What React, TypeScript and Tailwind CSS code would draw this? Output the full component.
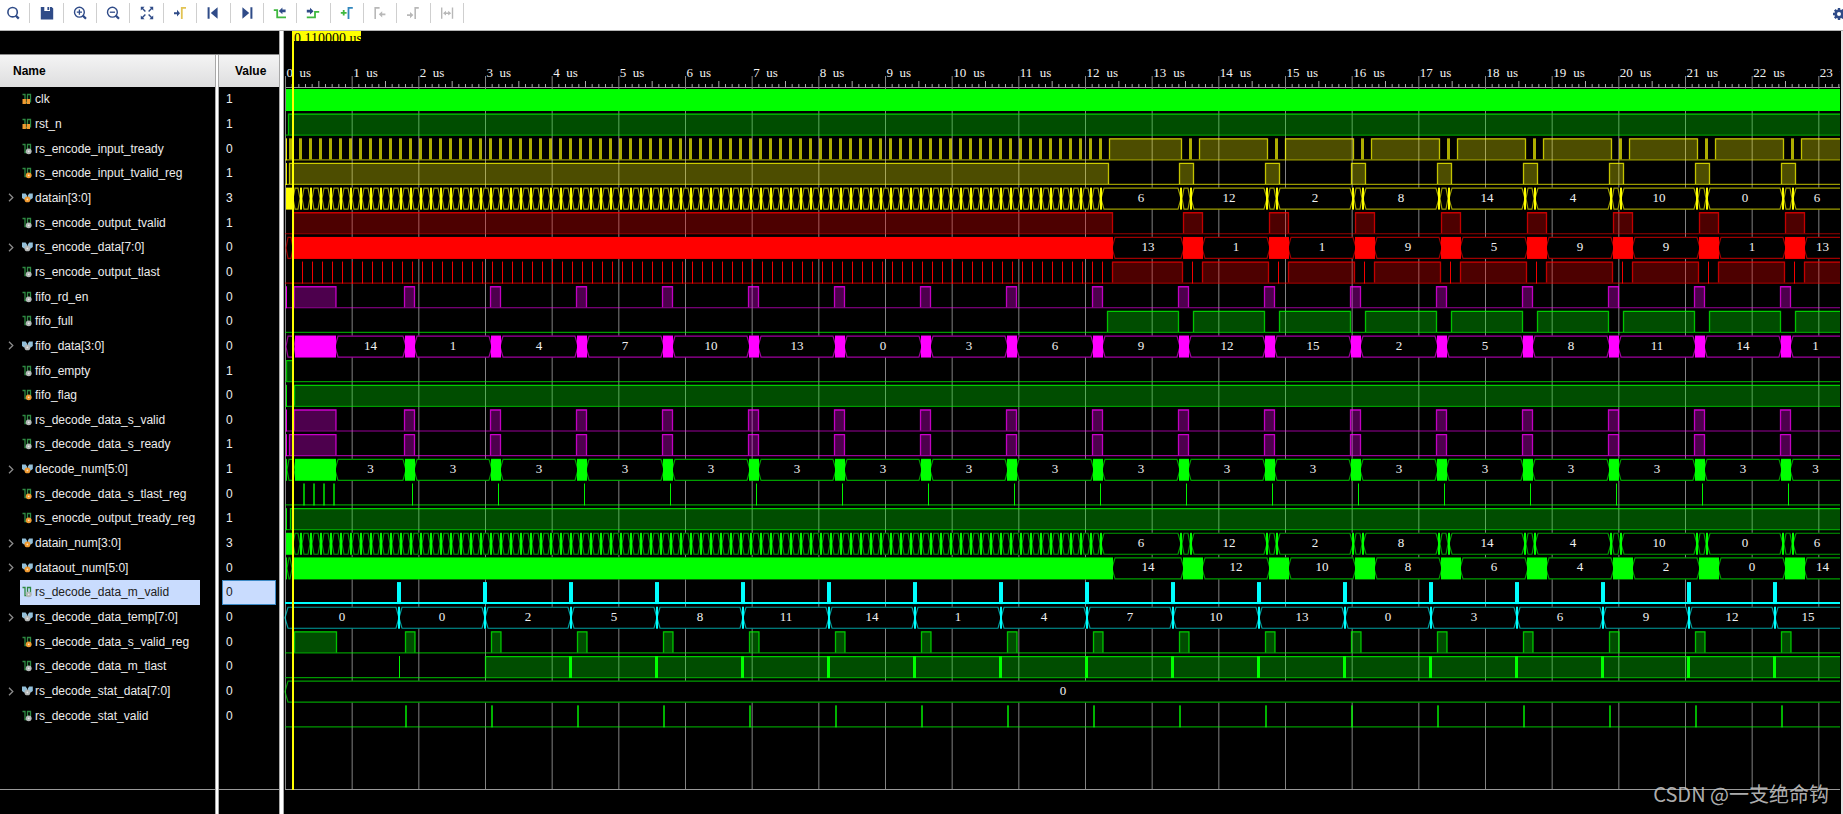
import React from "react";

/* ---------- signal model ---------- */

type Seg =
  | { k: "high"; a: number; b: number }
  | { k: "solid"; a: number; b: number }
  | { k: "cell"; a: number; b: number; v?: string };

type IconKind = "port" | "wire" | "reg" | "busWire" | "busReg";

interface Signal {
  name: string;
  value: string;
  icon: IconKind;
  color: string;
  bus?: boolean;
  selected?: boolean;
  segs: Seg[];
}

const START = 286;
const END = 1840;
const PERIOD = 86;
const GREEN = "#00ff00";
const YELLOW = "#ffff00";
const RED = "#ff0000";
const MAGENTA = "#ff00ff";
const CYAN = "#00ffff";

const high = (a: number, b: number): Seg => ({ k: "high", a, b: Math.min(b, END) });
const solid = (a: number, b: number): Seg => ({ k: "solid", a, b: Math.min(b, END) });
const cell = (a: number, b: number, v?: string): Seg => ({ k: "cell", a, b, v });

/** Repeats a segment builder n times, a fixed step apart. */
function every(n: number, step: number, make: (dx: number) => Seg[]): Seg[] {
  const out: Seg[] = [];
  for (let i = 0; i < n; i++) out.push(...make(i * step));
  return out;
}

/** Bus whose wide cells are separated by short bursts of activity. */
function burstCells(from: number, burst: number, width: number, values: string[]): Seg[] {
  const out: Seg[] = [];
  let a = from;
  values.forEach((v, i) => {
    const b = burst + i * PERIOD;
    if (b > END) {
      out.push(cell(a, END + 6, v));
      return;
    }
    out.push(cell(a, b, v), solid(b, b + width));
    a = b + width;
  });
  return out;
}

const nibbleValues = ["6", "12", "2", "8", "14", "4", "10", "0", "6"];

function nibbleBus(): Seg[] {
  const out: Seg[] = [solid(START, 293), cell(293, 300)];
  out.push(...every(80, 10, (d) => [solid(300 + d, 302 + d), cell(302 + d, 310 + d)]));
  out.push(solid(1100, 1102));
  let a = 1102;
  nibbleValues.forEach((v, i) => {
    const b = 1180 + i * PERIOD;
    if (b > END) {
      out.push(cell(a, END + 6, v));
      return;
    }
    out.push(cell(a, b, v), solid(b, b + 2), cell(b + 2, b + 10), solid(b + 10, b + 12));
    a = b + 12;
  });
  return out;
}

const readPulses = (first: number): Seg[] => [
  solid(START, START + 1),
  high(first, 336),
  ...every(17, PERIOD, (d) => [high(404.5 + d, 414.5 + d)]),
];

const tempValues = "0 0 2 5 8 11 14 1 4 7 10 13 0 3 6 9 12 15".split(" ");
const fifoValues = "14 1 4 7 10 13 0 3 6 9 12 15 2 5 8 11 14 1".split(" ");

const signals: Signal[] = [
  { name: "clk", value: "1", icon: "port", color: GREEN, segs: [solid(START, END)] },
  { name: "rst_n", value: "1", icon: "port", color: GREEN, segs: [high(288.5, END)] },
  {
    name: "rs_encode_input_tready", value: "0", icon: "wire", color: YELLOW,
    segs: [
      solid(286, 287), high(289.5, 292.5),
      ...every(81, 10, (d) => [high(299.5 + d, 301.5 + d)]),
      high(1109.5, 1181.5),
      ...every(8, PERIOD, (d) => [high(1189.5 + d, 1191.5 + d), high(1199.5 + d, 1267.5 + d)]),
    ],
  },
  {
    name: "rs_encode_input_tvalid_reg", value: "1", icon: "reg", color: YELLOW,
    segs: [solid(286, 287), high(289.5, 1108.5), ...every(8, PERIOD, (d) => [high(1179.5 + d, 1193.5 + d)])],
  },
  { name: "datain[3:0]", value: "3", icon: "busReg", color: YELLOW, bus: true, segs: nibbleBus() },
  {
    name: "rs_encode_output_tvalid", value: "1", icon: "wire", color: RED,
    segs: [high(293.5, 1112.5), ...every(8, PERIOD, (d) => [high(1183.5 + d, 1202.5 + d)])],
  },
  {
    name: "rs_encode_data[7:0]", value: "0", icon: "busWire", color: RED, bus: true,
    segs: [
      cell(286, 293), solid(293, 1113),
      ...burstCells(1113, 1183, 20, ["13", "1", "1", "9", "5", "9", "9", "1", "13"]),
    ],
  },
  {
    name: "rs_encode_output_tlast", value: "0", icon: "wire", color: RED,
    segs: [
      ...every(81, 10, (d) => [solid(302 + d, 303 + d)]),
      high(1112.5, 1182.5),
      ...every(8, PERIOD, (d) => [solid(1192 + d, 1193 + d), high(1202.5 + d, 1268.5 + d)]),
    ],
  },
  { name: "fifo_rd_en", value: "0", icon: "wire", color: MAGENTA, segs: readPulses(294) },
  {
    name: "fifo_full", value: "0", icon: "wire", color: GREEN,
    segs: [high(1107.5, 1178.5), ...every(8, PERIOD, (d) => [high(1193.5 + d, 1264.5 + d)])],
  },
  {
    name: "fifo_data[3:0]", value: "0", icon: "busWire", color: MAGENTA, bus: true,
    segs: [cell(286, 295), solid(295, 336), ...burstCells(336, 405, 10, fifoValues)],
  },
  { name: "fifo_empty", value: "1", icon: "wire", color: GREEN, segs: [high(286.5, 293)] },
  { name: "fifo_flag", value: "0", icon: "reg", color: GREEN, segs: [solid(286, 287), high(294.5, END)] },
  { name: "rs_decode_data_s_valid", value: "0", icon: "wire", color: MAGENTA, segs: readPulses(294) },
  { name: "rs_decode_data_s_ready", value: "1", icon: "wire", color: MAGENTA, segs: readPulses(289.5) },
  {
    name: "decode_num[5:0]", value: "1", icon: "busReg", color: GREEN, bus: true,
    segs: [
      solid(286, 287), cell(287, 295), solid(295, 336),
      ...burstCells(336, 405, 10, fifoValues.map(() => "3")),
    ],
  },
  {
    name: "rs_decode_data_s_tlast_reg", value: "0", icon: "reg", color: GREEN,
    segs: [
      ...every(4, 10, (d) => [solid(303 + d, 305 + d)]),
      ...every(17, PERIOD, (d) => [solid(412 + d, 413 + d)]),
    ],
  },
  {
    name: "rs_enocde_output_tready_reg", value: "1", icon: "reg", color: GREEN,
    segs: [solid(286, 287), high(290.5, END)],
  },
  { name: "datain_num[3:0]", value: "3", icon: "busReg", color: GREEN, bus: true, segs: nibbleBus() },
  {
    name: "dataout_num[5:0]", value: "0", icon: "busReg", color: GREEN, bus: true,
    segs: [
      solid(286, 287), cell(287, 292), solid(292, 1113),
      ...burstCells(1113, 1183, 20, ["14", "12", "10", "8", "6", "4", "2", "0", "14"]),
    ],
  },
  {
    name: "rs_decode_data_m_valid", value: "0", icon: "wire", color: CYAN, selected: true,
    segs: every(17, PERIOD, (d) => [solid(397 + d, 401 + d)]),
  },
  {
    name: "rs_decode_data_temp[7:0]", value: "0", icon: "busWire", color: CYAN, bus: true,
    segs: burstCells(286, 398, 2, tempValues),
  },
  {
    name: "rs_decode_data_s_valid_reg", value: "0", icon: "reg", color: GREEN,
    segs: [high(294.5, 336.5), ...every(17, PERIOD, (d) => [high(405.5 + d, 415 + d)])],
  },
  {
    name: "rs_decode_data_m_tlast", value: "0", icon: "wire", color: GREEN,
    segs: [
      solid(399, 400), high(485.5, END),
      ...every(15, PERIOD, (d) => [solid(569 + d, 572 + d)]),
    ],
  },
  {
    name: "rs_decode_stat_data[7:0]", value: "0", icon: "busWire", color: GREEN, bus: true,
    segs: [cell(286, END + 6, "0")],
  },
  {
    name: "rs_decode_stat_valid", value: "0", icon: "wire", color: GREEN,
    segs: every(17, PERIOD, (d) => [solid(405 + d, 407 + d)]),
  },
];

/* ---------- waveform drawing ---------- */

const TOP = 31;
const LEFT = 284;
const ROW_TOP = 89;
const ROW_PITCH = 641 / 26;
const H = 21;
const US = 400 / 6;
const ORIGIN = 285.5;
const BOTTOM = 789;

function Trace({ signal, y }: { signal: Signal; y: number }) {
  const { color, bus, selected, segs } = signal;
  const bottom = y + H;
  return (
    <g>
      {bus && <rect x={START} y={y} width={END - START} height={H + 1} fill="#000" />}
      {!bus && (
        <path
          d={`M${START - 1} ${selected ? bottom : bottom + 0.5}H${END}`}
          stroke={color}
          strokeWidth={selected ? 2 : 1.2}
          opacity={selected ? 1 : 0.6}
        />
      )}
      {segs.map((s, i) => {
        if (s.k === "solid") {
          const width = s.b - s.a;
          const opacity = bus || width > 2 ? 1 : width === 2 ? 0.7 : 0.95;
          return <rect key={i} x={s.a} y={y} width={width} height={H + 1} fill={color} opacity={opacity} />;
        }
        if (s.k === "high") {
          const closed = s.b < END;
          if (s.b - s.a < 4) {
            return (
              <rect
                key={i}
                x={s.a - 0.5}
                y={y}
                width={s.b - s.a + 1}
                height={H}
                fill={color}
                opacity={0.68}
              />
            );
          }
          return (
            <g key={i}>
              <rect x={s.a} y={y} width={s.b - s.a} height={H} fill={color} opacity={0.3} />
              <path
                d={`M${s.a} ${bottom}V${y + 0.5}H${s.b}${closed ? `V${bottom}` : ""}`}
                fill="none"
                stroke={color}
                strokeWidth={1.3}
                opacity={0.72}
              />
            </g>
          );
        }
        const t = y + 0.5;
        const m = y + 11;
        const b = bottom + 0.5;
        const visibleEnd = Math.min(s.b, END);
        const o = s.b - s.a > 20 ? 1 : 0;
        return (
          <g key={i}>
            <path
              d={`M${s.a - o} ${m}L${s.a + 2} ${t}H${s.b - 2}L${s.b + o} ${m}L${s.b - 2} ${b}H${s.a + 2}Z`}
              fill="none"
              stroke={color}
              strokeWidth={1.2}
              opacity={0.62}
            />
            {s.v && (
              <text x={(s.a + visibleEnd) / 2} y={y + 14} textAnchor="middle" fill="#f2f2f2">
                {s.v}
              </text>
            )}
          </g>
        );
      })}
    </g>
  );
}

function Waveform() {
  const ticks = Array.from({ length: 234 }, (_, i) => i);
  const majors = Array.from({ length: 24 }, (_, i) => i);
  return (
    <svg
      width="1557"
      height="783"
      className="block font-['Liberation_Serif','Times_New_Roman',serif] text-[13px]"
      role="img"
      aria-label="Waveform"
    >
      <defs>
        <clipPath id="plot">
          <rect x={LEFT} y={TOP} width={END - LEFT} height={783} />
        </clipPath>
        <clipPath id="cursor-flag">
          <rect x={293} y={31} width={68} height={10} />
        </clipPath>
      </defs>
      <g transform={`translate(${-LEFT} ${-TOP})`} clipPath="url(#plot)">
        <path d={`M285 87.5H${END}`} stroke="#9a9a9a" />
        {ticks.map((i) => {
          if (i % 10 === 0) return null;
          const x = ORIGIN + (i * US) / 10;
          return <path key={i} d={`M${x} 87V${i % 5 === 0 ? 81 : 84}`} stroke="#a8a8a8" />;
        })}
        {majors.map((i) => {
          const x = ORIGIN + i * US;
          return (
            <g key={i}>
              <path d={`M${x} 76V${BOTTOM}`} stroke="#828282" />
              <text y={77} fill="#f2f2f2">
                <tspan x={x + 1}>{i} </tspan>
                <tspan x={x + (i > 9 ? 21 : 14)}>us</tspan>
              </text>
            </g>
          );
        })}
        <path d={`M285 ${BOTTOM + 0.5}H${END}`} stroke="#9a9a9a" />
        {signals.map((s, i) => (
          <Trace key={s.name} signal={s} y={ROW_TOP + i * ROW_PITCH} />
        ))}
        <rect x={292} y={31} width={2} height={759} fill={YELLOW} />
        <rect x={293} y={31} width={68} height={10} fill={YELLOW} />
        <g clipPath="url(#cursor-flag)">
          <text x={294} y={43} fill="#000" className="text-[14px]">
            0.110000 us
          </text>
        </g>
      </g>
    </svg>
  );
}

/* ---------- signal list ---------- */

function SignalIcon({ kind }: { kind: IconKind }) {
  const dot = kind === "reg" || kind === "busReg" ? "#f09a30" : "#b4b8b8";
  const isBus = kind === "busWire" || kind === "busReg";
  return (
    <svg width="11" height="12" viewBox="0 0 11 12" className="shrink-0" aria-hidden="true">
      {isBus ? (
        <>
          <path d="M0 1.5H3.6L5 3.6V7.5H2L0 6zM10.8 1.5H7.2L5.8 3.6V7.5H8.8L10.8 6z" fill="#93bfd8" />
          <circle cx="5.4" cy="7.4" r="2.9" fill={dot} />
          <circle cx="5.4" cy="7.4" r="0.9" fill="#fff" opacity="0.7" />
        </>
      ) : (
        <>
          <path d="M0.5 1.5H3V9.5H5.5V1.5H8.5V9.5" fill="none" stroke="#2f8a43" strokeWidth="1.3" />
          {kind === "port" ? (
            <path d="M0.5 6h3.4v5H0.5zM4.6 6h3.4v5H4.6z" fill="#f09a30" />
          ) : (
            <>
              <circle cx="6.7" cy="8.3" r="2.9" fill={dot} />
              <circle cx="6.7" cy="8.3" r="0.9" fill="#fff" opacity="0.7" />
            </>
          )}
        </>
      )}
    </svg>
  );
}

const headCell = "flex h-8 items-center bg-linear-to-b from-[#f4f4f4] to-[#dededf] font-bold text-black";
const rowsGrid = "grid h-[641px] grid-rows-[repeat(26,minmax(0,1fr))]";

function NameColumn() {
  return (
    <div className="flex w-[215px] flex-col">
      <table className="block">
        <thead className="block">
          <tr className="block">
            <th className={`${headCell} pl-[13px]`}>Name</th>
          </tr>
        </thead>
        <tbody className={rowsGrid}>
          {signals.map((s) => (
            <tr key={s.name} className="flex">
              <td className="flex w-full items-center pr-[15px]">
                <span className="flex w-5 shrink-0 items-center pl-2">
                  {s.bus && (
                    <button type="button" aria-label={`Expand ${s.name}`} className="block">
                      <svg width="6" height="9" viewBox="0 0 6 9" aria-hidden="true">
                        <path d="M1 0.8L4.8 4.5L1 8.2" fill="none" stroke="#8c8c8c" strokeWidth="1.3" />
                      </svg>
                    </button>
                  )}
                </span>
                <span
                  className={
                    s.selected
                      ? "flex h-full flex-1 items-center gap-0.5 bg-[#c9dcfe] pl-0.5 text-[#202020]"
                      : "flex h-full flex-1 items-center gap-0.5 pl-0.5 text-[#ececec]"
                  }
                >
                  <SignalIcon kind={s.icon} />
                  <span>{s.name}</span>
                </span>
              </td>
            </tr>
          ))}
        </tbody>
      </table>
      <div className="flex-1 border-b border-[#9a9a9a]" />
      <div className="h-6" />
    </div>
  );
}

function ValueColumn() {
  return (
    <div className="flex w-[60px] flex-col">
      <table className="block">
        <thead className="block">
          <tr className="block">
            <th className={`${headCell} pl-4`}>Value</th>
          </tr>
        </thead>
        <tbody className={rowsGrid}>
          {signals.map((s) => (
            <tr key={s.name} className="flex px-[3px]">
              <td
                className={
                  s.selected
                    ? "flex w-full items-center border border-[#3c8ac6] bg-[#c9dcfe] pl-[3px] text-[#202020]"
                    : "flex w-full items-center pl-1 text-[#ececec]"
                }
              >
                {s.value}
              </td>
            </tr>
          ))}
        </tbody>
      </table>
      <div className="flex-1 border-b border-[#9a9a9a]" />
      <div className="h-6" />
    </div>
  );
}

/* ---------- toolbar ---------- */

const NAVY = "#2f4b88";
const GREY = "#b8b8b8";
const LEAF = "#3fb83f";

const tools: { label: string; off?: boolean; art: React.ReactNode }[] = [
  {
    label: "Find",
    art: (
      <g fill="none" stroke={NAVY}>
        <circle cx="6.6" cy="6.2" r="4.7" strokeWidth="1.6" />
        <path d="M9.8 9.6L12.8 12.6" strokeWidth="2.2" />
      </g>
    ),
  },
  {
    label: "Save",
    art: (
      <g>
        <path d="M0.8 1H4.3V5H10V1H11.7L13.2 2.5V13.4H0.8Z" fill={NAVY} />
        <path d="M7.4 1H9.2V4H7.4Z" fill={NAVY} />
      </g>
    ),
  },
  {
    label: "Zoom in",
    art: (
      <g fill="none" stroke={NAVY}>
        <circle cx="6.4" cy="6.2" r="4.9" strokeWidth="1.4" />
        <path d="M9.8 9.6L13 12.8" strokeWidth="2.2" />
        <path d="M3.8 6.2H9M6.4 3.6V8.8" strokeWidth="1.3" />
      </g>
    ),
  },
  {
    label: "Zoom out",
    art: (
      <g fill="none" stroke={NAVY}>
        <circle cx="6.4" cy="6.2" r="4.9" strokeWidth="1.4" />
        <path d="M9.8 9.6L13 12.8" strokeWidth="2.2" />
        <path d="M3.8 6.2H9" strokeWidth="1.3" />
      </g>
    ),
  },
  {
    label: "Zoom fit",
    art: (
      <g>
        <path d="M0.8 0.8H4.6L0.8 4.6ZM13.2 0.8V4.6L9.4 0.8ZM0.8 13.2V9.4L4.6 13.2ZM13.2 13.2H9.4L13.2 9.4Z" fill={NAVY} />
        <path d="M2 2L5.4 5.4M12 2L8.6 5.4M2 12L5.4 8.6M12 12L8.6 8.6" stroke={NAVY} strokeWidth="1.4" />
      </g>
    ),
  },
  {
    label: "Go to cursor",
    art: (
      <g>
        <path d="M1 6.2H4V3.8L7 7.2L4 10.6V8.2H1Z" fill={NAVY} />
        <path d="M8.8 13V1.9H13" fill="none" stroke="#e2c354" strokeWidth="1.8" />
      </g>
    ),
  },
  {
    label: "Go to start",
    art: <path d="M1.6 1.2H3.6V12.8H1.6ZM11.6 1.2V12.8L4.8 7Z" fill={NAVY} />,
  },
  {
    label: "Go to end",
    art: <path d="M10.4 1.2H12.4V12.8H10.4ZM2.4 1.2V12.8L9.2 7Z" fill={NAVY} />,
  },
  {
    label: "Previous transition",
    art: (
      <g>
        <path d="M0.8 4.2H4.2V11.4H13" fill="none" stroke={LEAF} strokeWidth="1.8" />
        <path d="M12.6 3.6H9.4V1.6L5.8 5L9.4 8.2V6.2H12.6Z" fill={NAVY} />
      </g>
    ),
  },
  {
    label: "Next transition",
    art: (
      <g>
        <path d="M0.8 11.4H9V5.8H13.2" fill="none" stroke={LEAF} strokeWidth="1.8" />
        <path d="M0.8 3.8H4V1.8L7.6 5.2L4 8.6V6.6H0.8Z" fill={NAVY} />
      </g>
    ),
  },
  {
    label: "Add marker",
    art: (
      <g fill="none">
        <path d="M0.8 6.8H6.6M3.7 4V9.6" stroke={LEAF} strokeWidth="1.8" />
        <path d="M8.5 13V1.9H12.8" stroke="#3186bd" strokeWidth="1.8" />
      </g>
    ),
  },
  {
    label: "Previous marker",
    off: true,
    art: (
      <g>
        <path d="M2.2 13V1.9H6.6" fill="none" stroke={GREY} strokeWidth="1.6" />
        <path d="M12.4 7.4H9.2V5.2L5.8 8.3L9.2 11.4V9.2H12.4Z" fill={GREY} />
      </g>
    ),
  },
  {
    label: "Next marker",
    off: true,
    art: (
      <g>
        <path d="M9.2 13V1.9H12.8" fill="none" stroke={GREY} strokeWidth="1.6" />
        <path d="M1 8.2H4V6L7.4 9.1L4 12.2V10H1Z" fill={GREY} />
      </g>
    ),
  },
  {
    label: "Swap cursors",
    off: true,
    art: (
      <g>
        <path d="M1.7 1.4V12.8M12.5 1.4V12.8M4 7.2H10" stroke={GREY} strokeWidth="1.4" />
        <path d="M6 4.8V9.6L3 7.2ZM8.2 4.8V9.6L11.2 7.2Z" fill={GREY} />
      </g>
    ),
  },
];

function Toolbar() {
  return (
    <div
      role="toolbar"
      aria-label="Waveform tools"
      className="flex h-[31px] justify-between overflow-hidden border-b border-[#b4b4b4] bg-white"
    >
      <div className="-ml-[3px] flex w-[467px] pt-[3px]">
        {tools.map((t) => (
          <button
            key={t.label}
            type="button"
            aria-label={t.label}
            disabled={t.off}
            className="flex h-5 flex-1 items-center justify-center border-r border-[#cfcfcf]"
          >
            <svg width="14" height="14" viewBox="0 0 14 14" aria-hidden="true">
              {t.art}
            </svg>
          </button>
        ))}
      </div>
      <button type="button" aria-label="Settings" className="-mr-0.5 flex h-[27px] items-center">
        <svg width="12" height="12" viewBox="0 0 12 12" aria-hidden="true">
          <path
            d="M6 0V12M0 6H12M1.8 1.8L10.2 10.2M10.2 1.8L1.8 10.2"
            stroke={NAVY}
            strokeWidth="2.4"
          />
          <circle cx="6" cy="6" r="3.3" fill="#fff" stroke={NAVY} strokeWidth="2.6" />
        </svg>
      </button>
    </div>
  );
}

/* ---------- page ---------- */

const splitter = "shrink-0 border-x border-[#a8a8a8] bg-white";

export default function App() {
  return (
    <div className="relative flex min-h-screen flex-col overflow-hidden bg-black font-['Liberation_Sans',Arial,sans-serif] text-[12px] leading-4">
      <Toolbar />
      <div className="flex flex-1">
        <div className="flex shrink-0 flex-col">
          <div className="h-6 border-b border-[#8a8a8a]" />
          <div className="flex flex-1">
            <NameColumn />
            <div className={`${splitter} w-1`} />
            <ValueColumn />
          </div>
        </div>
        <div className={`${splitter} w-[5px]`} />
        <main className="min-w-0 flex-1 overflow-hidden">
          <Waveform />
        </main>
        <div className="w-0.5 shrink-0 bg-[#e4e4e4]" />
      </div>
      <p className="absolute right-[14px] bottom-2 font-['Noto_Sans_CJK_SC',sans-serif] text-[20px] leading-6 text-[#c4c4c4]/90">
        CSDN @一支绝命钩
      </p>
    </div>
  );
}
